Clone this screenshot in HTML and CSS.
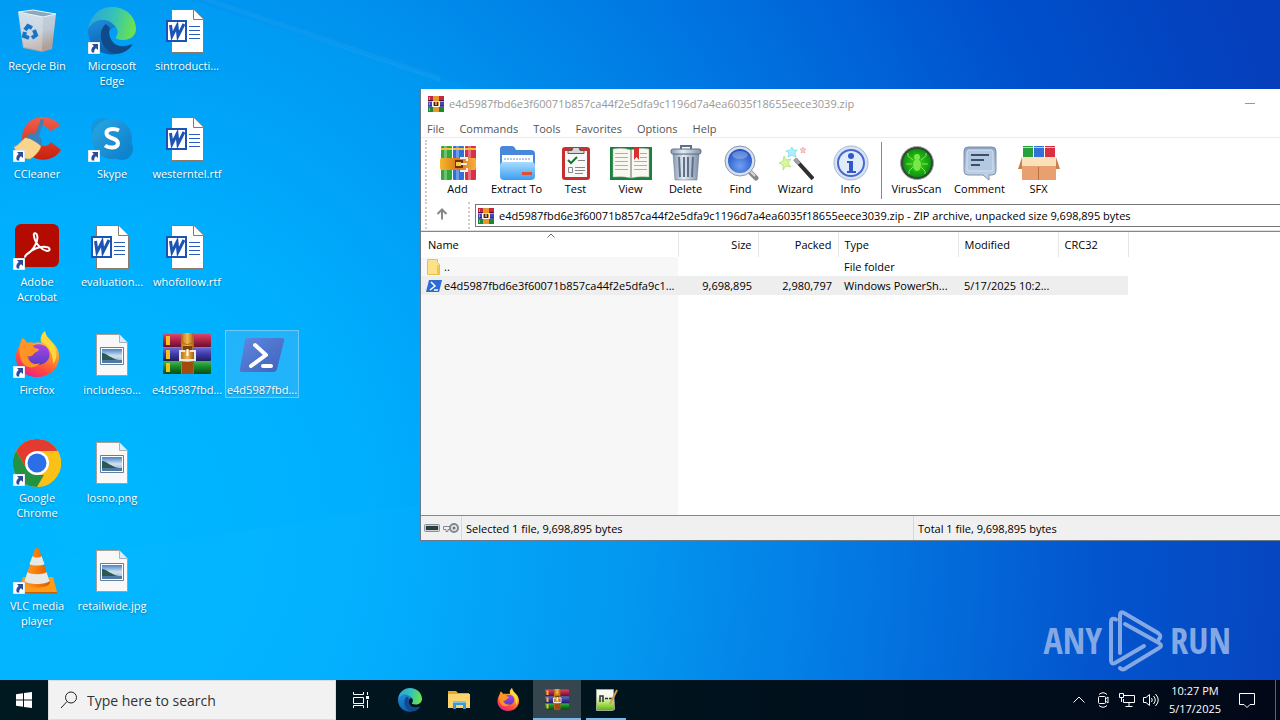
FILE: index.html
```html
<!DOCTYPE html>
<html lang="en">
<head>
    <meta charset="UTF-8">
    <meta name="viewport" content="width=device-width, initial-scale=1.0">
    <title>Desktop</title>
    <link rel="stylesheet" href="styles.css">
</head>
<body>
    <!-- Shared icons -->
    <svg class="sprite" aria-hidden="true">
        <defs>
            <linearGradient id="g-edge-top" x1="0" y1="0.3" x2="1" y2="0.5"><stop offset="0" stop-color="#2aa5dc"/><stop offset="0.5" stop-color="#35c2b8"/><stop offset="1" stop-color="#6be34e"/></linearGradient>
            <linearGradient id="g-edge-left" x1="0" y1="0" x2="0.4" y2="1"><stop offset="0" stop-color="#1e90dc"/><stop offset="1" stop-color="#0c5cae"/></linearGradient>
            <linearGradient id="g-ff" x1="0.8" y1="0" x2="0.3" y2="1"><stop offset="0" stop-color="#fff04a"/><stop offset="0.4" stop-color="#ff9a26"/><stop offset="0.75" stop-color="#ff4a40"/><stop offset="1" stop-color="#e8208a"/></linearGradient>
            <linearGradient id="g-ff-in" x1="0" y1="0" x2="0" y2="1"><stop offset="0" stop-color="#a846e8"/><stop offset="1" stop-color="#5a3cc4"/></linearGradient>
            <linearGradient id="g-ps" x1="0" y1="0" x2="1" y2="1"><stop offset="0" stop-color="#6088e0"/><stop offset="1" stop-color="#3d62bc"/></linearGradient>
            <linearGradient id="g-red" x1="0" y1="0" x2="0" y2="1"><stop offset="0" stop-color="#d8486a"/><stop offset="0.4" stop-color="#b82850"/><stop offset="1" stop-color="#68102c"/></linearGradient>
            <linearGradient id="g-blue" x1="0" y1="0" x2="0" y2="1"><stop offset="0" stop-color="#6a68d8"/><stop offset="0.4" stop-color="#4440b0"/><stop offset="1" stop-color="#201c60"/></linearGradient>
            <linearGradient id="g-green" x1="0" y1="0" x2="0" y2="1"><stop offset="0" stop-color="#40b048"/><stop offset="0.4" stop-color="#188a2c"/><stop offset="1" stop-color="#084c14"/></linearGradient>
            <linearGradient id="g-belt" x1="0" y1="0" x2="1" y2="0"><stop offset="0" stop-color="#b8741c"/><stop offset="0.5" stop-color="#f4b848"/><stop offset="1" stop-color="#a85c14"/></linearGradient>
            <linearGradient id="g-strap" x1="0" y1="0" x2="1" y2="0"><stop offset="0" stop-color="#f8b830"/><stop offset="0.5" stop-color="#d87818"/><stop offset="1" stop-color="#f8b040"/></linearGradient>
            <linearGradient id="g-bin" x1="0" y1="0" x2="0.3" y2="1"><stop offset="0" stop-color="#c4d8e8"/><stop offset="0.6" stop-color="#bcc8d4"/><stop offset="1" stop-color="#b0a098"/></linearGradient>
            <linearGradient id="g-skype" x1="0" y1="0" x2="1" y2="1"><stop offset="0" stop-color="#28a8e4"/><stop offset="1" stop-color="#0c7cc8"/></linearGradient>
            <linearGradient id="g-cc" x1="0" y1="0" x2="0" y2="1"><stop offset="0" stop-color="#f0604c"/><stop offset="1" stop-color="#c8200c"/></linearGradient>
            <linearGradient id="g-cone" x1="0" y1="0" x2="1" y2="0"><stop offset="0" stop-color="#ff9a20"/><stop offset="0.5" stop-color="#f87c08"/><stop offset="1" stop-color="#d85800"/></linearGradient>
            <linearGradient id="g-sky" x1="0" y1="0" x2="0" y2="1"><stop offset="0" stop-color="#4a80cc"/><stop offset="0.5" stop-color="#d0e4f0"/><stop offset="1" stop-color="#88a8c4"/></linearGradient>
            <linearGradient id="g-folder" x1="0" y1="0" x2="0" y2="1"><stop offset="0" stop-color="#a8dcff"/><stop offset="1" stop-color="#3c9cf0"/></linearGradient>
            <linearGradient id="g-steel" x1="0" y1="0" x2="1" y2="0"><stop offset="0" stop-color="#8898b0"/><stop offset="0.4" stop-color="#e4ecf4"/><stop offset="1" stop-color="#8090a8"/></linearGradient>
            <linearGradient id="g-bubble" x1="0" y1="0" x2="0" y2="1"><stop offset="0" stop-color="#88a4c8"/><stop offset="1" stop-color="#c8d8e8"/></linearGradient>
            <linearGradient id="g-page" x1="0" y1="0" x2="0" y2="1"><stop offset="0.3" stop-color="#f8faf0"/><stop offset="0.7" stop-color="#a8dc50"/><stop offset="1" stop-color="#58b018"/></linearGradient>
            <radialGradient id="g-lens" cx="0.5" cy="0.7" r="0.7"><stop offset="0" stop-color="#70a0f4"/><stop offset="1" stop-color="#1c50c0"/></radialGradient>
            <radialGradient id="g-virus"><stop offset="0" stop-color="#40d818"/><stop offset="1" stop-color="#0c9410"/></radialGradient>
        </defs>
        <symbol id="shortcut" viewBox="0 0 12 12">
            <path fill="#fff" stroke="#9ab" stroke-width="0.5" d="M0 0h12v12H0z"/>
            <path fill="#2c4c98" d="M4 2h6v6L8 6.200C6.500 7.200 6 8.500 6.300 10.500L4 10.500C2.600 8 3.500 5.500 5.800 4z"/>
        </symbol>
        <symbol id="edge" viewBox="0 0 48 48">
            <path fill="url(#g-edge-left)" d="M0 22C2 12 22 8 29 20c-6 0-9 5-7 11 3 8 12 10 22 6-7 10-20 13-31 8C4 41 0 32 0 22z"/>
            <path fill="#114a8b" d="M18 17c-8 6-7 21 4 28 9 4 18 0 23-8-8 5-17 3-21-3-3-4-4-10-2-13z"/>
            <path fill="url(#g-edge-top)" d="M0 22C2 8 12 0 24 0c14 0 24 10 24 22 0 7-6 11-13 11-6 0-8-2-7-3 3-4 2-8-2-12C19 10 6 11 0 22z"/>
        </symbol>
        <symbol id="firefox" viewBox="0 0 48 48">
            <path fill="url(#g-ff)" d="M24 46C11 46 3 37 3 26c0-6 2-10 5-13l1-6c3 1 4 3 5 5 2-1 5-1 7 0 3-1 5-1 7 0-1-5 0-9 4-12 1 6 5 8 8 12 4 4 6 8 6 14 0 12-10 20-22 20z"/>
            <path fill="url(#g-ff-in)" d="M18 17c3-5 13-5 17 1 4 7 0 15-9 16-9 0-14-8-8-17z"/>
            <path fill="#ff9426" d="M9 8c2 4 7 5 12 4-2 3-1 5 5 6 0 3-5 3-6 6-2 2-4 1-6 1 1 6 7 10 13 7-4 6-14 6-18-1-3-6-4-16 0-23z"/>
            <path fill="#ffd83c" d="M29 11c-1-4 0-8 3-10 1 6 5 8 8 12 5 7 4 16 0 20 0-10-3-17-11-22z"/>
        </symbol>
        <symbol id="word" viewBox="0 0 48 48">
            <path fill="#fff" stroke="#8a7868" d="M8.500 2.500h22l10 10v33h-32z"/>
            <path fill="#fff" stroke="#8a7868" d="M30.500 2.500v10h10"/>
            <path stroke="#2b5cb8" d="M26 19.500h11M26 23.500h11M26 27.500h11M26 31.500h11"/>
            <path fill="#fff" stroke="#1c54b4" stroke-width="2" d="M4 14h19v20H4z"/>
            <path fill="none" stroke="#1c54b4" stroke-width="3" d="M7.500 18l1.500 11 5-10 1 10 6-12"/>
        </symbol>
        <symbol id="picture" viewBox="0 0 48 48">
            <path fill="#f8f8f8" stroke="#a8a098" d="M8.500 3.500h23l8 8v33h-31z"/>
            <path fill="#d8eef8" stroke="#a8b0b8" d="M31.500 3.500v8h8"/>
            <path fill="#fff" stroke="#60809c" d="M12.500 16.500h23v17h-23z"/>
            <path fill="url(#g-sky)" d="M14 18h20v14H14z"/>
            <path fill="#2c5850" d="M14 22c5 0 9 6 17 7H14z"/>
            <path fill="#5078a0" d="M14 29h20v3H14z"/>
        </symbol>
        <symbol id="winrar" viewBox="0 0 48 48">
            <rect x="0" y="3" width="48" height="13" rx="1" fill="url(#g-red)"/>
            <rect x="0" y="17" width="48" height="13" rx="1" fill="url(#g-blue)"/>
            <rect x="0" y="31" width="48" height="12" rx="1" fill="url(#g-green)"/>
            <path fill="#f4c020" d="M3 5h4v9H3zM3 19h4v9H3zM3 32h4v9H3z"/>
            <path fill="url(#g-belt)" d="M18 2h13v41H18z"/>
            <path fill="#80400c" d="M20 15h9v4h-9z"/>
            <path fill="#a04c10" d="M19 31h11v12H19z"/>
            <path fill="none" stroke="#e8e8e8" stroke-width="2" d="M22 20h-5v9h15v-9h-5"/>
            <path stroke="#fff" stroke-width="2" d="M24.500 18v7"/>
            <path fill="none" stroke="#a86810" d="M19 4v7q5.500 5 11 0V4"/>
        </symbol>
        <!-- Simplified books for 16px -->
        <symbol id="winrar-small" viewBox="0 0 16 16">
            <path fill="#c02848" d="M0 0h16v5H0z"/>
            <path fill="#4048b8" d="M0 5.500h16v5H0z"/>
            <path fill="#188838" d="M0 11h16v5H0z"/>
            <path fill="#600c28" d="M0 4h16v1H0z"/>
            <path fill="#201850" d="M0 9.500h16v1H0z"/>
            <path fill="#e89828" d="M5 0h6v16H5zM1 1h1v3H1zM1 6.500h1v3H1zM1 12h1v3H1z"/>
            <path fill="#582008" d="M6 6h4v4H6z"/>
            <path fill="none" stroke="#fff" d="M6.500 5.500h-2v5h7v-5h-2M8 5v4"/>
        </symbol>
        <symbol id="powershell" viewBox="0 0 48 48">
            <path fill="url(#g-ps)" d="M9 7h35q3 0 2 3l-7 28q-1 3-4 3H4q-3 0-2-3L7 9q0-2 2-2z"/>
            <path fill="none" stroke="#fff" stroke-width="4" stroke-linecap="round" stroke-linejoin="round" d="M17 14l11 10-15 11M25 35h8"/>
        </symbol>
    </svg>

    <main class="desktop">
        <svg class="beams" viewBox="0 0 1280 680" preserveAspectRatio="none" aria-hidden="true">
            <path fill="#0060d8" fill-opacity="0.08" d="M190 0L640 140H1280V0z"/>
            <path fill="#fff" fill-opacity="0.04" d="M200 0L440 82V76L215 0z"/>
            <path fill="#40c8ff" fill-opacity="0.04" d="M150 545L840 440L1280 400V680H0V568z"/>
        </svg>

        <div class="icons">
            <div class="icon-row">
                <a href="#" class="shortcut">
                    <svg class="glyph" viewBox="0 0 48 48">
                        <path fill="url(#g-bin)" d="M5 5l38 2-4 35-10 3-19-4z"/>
                        <path fill="#8ca8bc" stroke="#e8f4fc" d="M5.500 5L20 3l23 4-13 3z"/>
                        <path fill="#fff" fill-opacity="0.25" d="M6 6l24 4-1 34-18-4z"/>
                        <path fill="none" stroke="#1474c8" stroke-width="4" d="M12 23l3-4 4 2M21 23l2 5-4 3M16 31l-5-2 1-4"/>
                    </svg>
                    <span>Recycle Bin</span>
                </a>
                <a href="#" class="shortcut">
                    <svg class="glyph" viewBox="0 0 48 48"><use href="#edge"/><use href="#shortcut" x="0" y="35" width="12" height="12"/></svg>
                    <span>Microsoft Edge</span>
                </a>
                <a href="#" class="shortcut">
                    <svg class="glyph" viewBox="0 0 48 48"><use href="#word"/></svg>
                    <span>sintroducti...</span>
                </a>
            </div>
            <div class="icon-row">
                <a href="#" class="shortcut">
                    <svg class="glyph" viewBox="0 0 48 48">
                        <path fill="url(#g-cc)" d="M47 11C40 0 22-1 14 9c-8 9-6 24 4 32 9 6 23 5 30-6l-10-8c-3 5-10 5-13 1-4-6-1-16 5-17 4 0 6 3 7 5z"/>
                        <path fill="#f8d48c" stroke="#d8a850" stroke-width="0.500" d="M1 32c5-2 7-6 11-9 6-2 13 2 16 8-1 5-6 10-11 13C9 44 4 39 1 32z"/>
                        <path fill="#3c80b8" d="M13 23c1-4 5-5 9-4l6-15 3 1-5 16c3 3 3 6 2 10-5-4-9-7-15-8z"/>
                        <use href="#shortcut" x="0" y="35" width="12" height="12"/>
                    </svg>
                    <span>CCleaner</span>
                </a>
                <a href="#" class="shortcut">
                    <svg class="glyph" viewBox="0 0 48 48">
                        <circle cx="14" cy="14" r="11" fill="#1896dc"/>
                        <circle cx="34" cy="34" r="11" fill="#0c84d0"/>
                        <circle cx="24" cy="24" r="20" fill="url(#g-skype)"/>
                        <path fill="none" stroke="#fff" stroke-width="4" d="M31 15.500c-5-2.500-13-2-12.500 3C19 24.500 30 22 30 28.500c-.500 5-9 5-13 2"/>
                        <use href="#shortcut" x="0" y="35" width="12" height="12"/>
                    </svg>
                    <span>Skype</span>
                </a>
                <a href="#" class="shortcut">
                    <svg class="glyph" viewBox="0 0 48 48"><use href="#word"/></svg>
                    <span>westerntel.rtf</span>
                </a>
            </div>
            <div class="icon-row">
                <a href="#" class="shortcut">
                    <svg class="glyph" viewBox="0 0 48 48">
                        <rect x="2" y="1" width="44" height="43" rx="6" fill="#b30b00"/>
                        <path fill="none" stroke="#fff" stroke-width="2" d="M13 32c7-4 13-14 11-20-1-3-4-2-3 1 1 8 8 14 13 15 4 0 3-4-1-4-7-1-14 3-19 7-3 3-2 4-1 1z"/>
                        <use href="#shortcut" x="0" y="35" width="12" height="12"/>
                    </svg>
                    <span>Adobe Acrobat</span>
                </a>
                <a href="#" class="shortcut">
                    <svg class="glyph" viewBox="0 0 48 48"><use href="#word"/></svg>
                    <span>evaluation...</span>
                </a>
                <a href="#" class="shortcut">
                    <svg class="glyph" viewBox="0 0 48 48"><use href="#word"/></svg>
                    <span>whofollow.rtf</span>
                </a>
            </div>
            <div class="icon-row">
                <a href="#" class="shortcut">
                    <svg class="glyph" viewBox="0 0 48 48"><use href="#firefox"/><use href="#shortcut" x="0" y="35" width="12" height="12"/></svg>
                    <span>Firefox</span>
                </a>
                <a href="#" class="shortcut">
                    <svg class="glyph" viewBox="0 0 48 48"><use href="#picture"/></svg>
                    <span>includeso...</span>
                </a>
                <a href="#" class="shortcut">
                    <svg class="glyph" viewBox="0 0 48 48"><use href="#winrar"/></svg>
                    <span>e4d5987fbd...</span>
                </a>
                <a href="#" class="shortcut selected">
                    <svg class="glyph" viewBox="0 0 48 48"><use href="#powershell"/></svg>
                    <span>e4d5987fbd...</span>
                </a>
            </div>
            <div class="icon-row">
                <a href="#" class="shortcut">
                    <svg class="glyph" viewBox="0 0 48 48">
                        <circle cx="24" cy="24" r="24" fill="#fbc116"/>
                        <path fill="#e33b2e" d="M3.200 12A24 24 0 0 1 44.800 12H24L13.600 30z"/>
                        <path fill="#229342" d="M3.200 12l10.400 18c3 5 8 6 12 6h8L24 48A24 24 0 0 1 3.200 12z"/>
                        <path fill="#fbc116" d="M44.800 12H24l10.400 18L24 48A24 24 0 0 0 44.800 12z"/>
                        <circle cx="24" cy="24" r="12" fill="#fff"/>
                        <circle cx="24" cy="24" r="9.500" fill="#2a6ee8"/>
                        <use href="#shortcut" x="0" y="35" width="12" height="12"/>
                    </svg>
                    <span>Google Chrome</span>
                </a>
                <a href="#" class="shortcut">
                    <svg class="glyph" viewBox="0 0 48 48"><use href="#picture"/></svg>
                    <span>losno.png</span>
                </a>
            </div>
            <div class="icon-row">
                <a href="#" class="shortcut">
                    <svg class="glyph" viewBox="0 0 48 48">
                        <path fill="#fc9c18" d="M10 30h30l4 15H5z"/>
                        <path fill="#c86000" d="M5 45h39v1.500H5z"/>
                        <path fill="url(#g-cone)" d="M22 2q2-2 4 0l11 34c-2 6-24 6-26 0z"/>
                        <path fill="#e8e8e4" d="M19.500 9c2 2 7 2 9 0l3 8c-2 2-13 2-15 0zM14.500 25c3 3 16 3 19 0l3 9c-3 4-22 4-25 0z"/>
                        <use href="#shortcut" x="0" y="35" width="12" height="12"/>
                    </svg>
                    <span>VLC media player</span>
                </a>
                <a href="#" class="shortcut">
                    <svg class="glyph" viewBox="0 0 48 48"><use href="#picture"/></svg>
                    <span>retailwide.jpg</span>
                </a>
            </div>
        </div>

        <section class="window">
            <header class="titlebar">
                <svg class="icon-16" viewBox="0 0 16 16"><use href="#winrar-small"/></svg>
                <h1>e4d5987fbd6e3f60071b857ca44f2e5dfa9c1196d7a4ea6035f18655eece3039.zip</h1>
                <button class="caption" aria-label="Minimize"><svg viewBox="0 0 10 10"><path d="M0 5.500h10"/></svg></button>
                <button class="caption" aria-label="Maximize"><svg viewBox="0 0 10 10"><path d="M.500.500h9v9h-9z"/></svg></button>
                <button class="caption" aria-label="Close"><svg viewBox="0 0 10 10"><path d="M0 0l10 10M10 0L0 10"/></svg></button>
            </header>

            <nav class="menu">
                <button>File</button>
                <button>Commands</button>
                <button>Tools</button>
                <button>Favorites</button>
                <button>Options</button>
                <button>Help</button>
            </nav>

            <div class="toolbar">
                <span class="grip"></span>
                <button>
                    <svg viewBox="0 0 36 36">
                        <rect x="1" y="1" width="11" height="34" rx="1" fill="#30a838"/>
                        <rect x="13" y="1" width="11" height="34" rx="1" fill="#3070d8"/>
                        <rect x="25" y="1" width="11" height="34" rx="1" fill="#d83048"/>
                        <path fill="#fff" fill-opacity="0.3" d="M4 1h3v34H4zM16 1h3v34h-3zM28 1h3v34h-3z"/>
                        <path fill="#f8c030" d="M1 3h11v2H1zM13 3h11v2H13zM25 3h11v2H25z"/>
                        <path fill="url(#g-strap)" d="M2 13h33q1 0 1 2v8q0 2-1 2H2q-2 0-2-2v-8q0-2 2-2z"/>
                        <path fill="#703008" d="M15 15h8v8h-8z"/>
                        <path fill="none" stroke="#f4f0e8" stroke-width="2" d="M20 13h7v3M20 26h7v-3M21 19h6"/>
                        <path fill="#f8c850" d="M16 17h5v4h-5z"/>
                    </svg>
                    <span>Add</span>
                </button>
                <button class="wide">
                    <svg viewBox="0 0 36 36">
                        <path fill="#4888dc" d="M1 4q0-3 3-3h9q2 0 3 2l1 2h15q4 0 4 4v20H1z"/>
                        <path fill="#fff" d="M3 10h31v10H3z"/>
                        <path stroke="#b8c8e0" stroke-width="2" stroke-dasharray="2 1" d="M5 14h27"/>
                        <rect x="1" y="17" width="35" height="18" rx="4" fill="url(#g-folder)"/>
                        <path fill="#e05030" d="M23 27h10v3H23z"/>
                    </svg>
                    <span>Extract To</span>
                </button>
                <button>
                    <svg viewBox="0 0 36 36">
                        <rect x="4" y="2" width="28" height="33" rx="3" fill="#c83030"/>
                        <path fill="#f8f8f8" d="M7 6h22v26H7z"/>
                        <path fill="#d8d8d8" stroke="#685858" d="M10 5.500h4l1-3h6l1 3h4v3H10z"/>
                        <path fill="none" stroke="#187830" stroke-width="2" d="M10 15l3 3 6-6"/>
                        <path stroke="#888" d="M20 15.500h7M17 22.500h10M17 25.500h10M17 28.500h8"/>
                        <path fill="none" stroke="#888" d="M10.500 22.500h4v5h-4z"/>
                    </svg>
                    <span>Test</span>
                </button>
                <button>
                    <svg class="book" viewBox="0 0 42 36">
                        <path fill="#188040" d="M0 2h42v33H0z"/>
                        <path fill="#f8f8f0" stroke="#b0b0a0" stroke-width="0.500" d="M3 4q10-2 18 1v28q-8-2-18-1zM39 4q-10-2-18 1v28q8-2 18-1z"/>
                        <path stroke="#b0b0a8" d="M5 8.500h13M5 12.500h13M5 16.500h13M5 20.500h13M5 24.500h13M24 16.500h13M24 20.500h13M24 24.500h13M30 8.500h7M30 12.500h7"/>
                        <path stroke="#888" d="M21 5v28"/>
                        <path fill="#d83030" d="M24 3h5v12l-2.500-3-2.500 3z"/>
                    </svg>
                    <span>View</span>
                </button>
                <button>
                    <svg viewBox="0 0 36 36">
                        <path fill="url(#g-steel)" stroke="#607088" stroke-width="0.500" d="M5 9h26l-2 26H7z"/>
                        <path stroke="#607088" stroke-width="2" d="M11 12l1 20M16 12v20M20 12v20M25 12l-1 20"/>
                        <rect x="3" y="4" width="30" height="5" rx="2" fill="url(#g-steel)" stroke="#607088"/>
                        <path fill="none" stroke="#607088" stroke-width="2" d="M13 4V1h10v3"/>
                    </svg>
                    <span>Delete</span>
                </button>
                <button>
                    <svg viewBox="0 0 36 36">
                        <path stroke="#888" stroke-width="5" stroke-linecap="round" d="M27 27l6 6"/>
                        <path stroke="#d8d8d8" stroke-width="2" d="M26 25l6 6"/>
                        <circle cx="17" cy="16" r="15" fill="#d8e0ec" stroke="#8898b0"/>
                        <circle cx="17" cy="16" r="12" fill="url(#g-lens)"/>
                        <ellipse cx="17" cy="10" rx="8" ry="4" fill="#fff" fill-opacity="0.250"/>
                    </svg>
                    <span>Find</span>
                </button>
                <button>
                    <svg viewBox="0 0 36 36">
                        <path stroke="#303030" stroke-width="4" d="M17 14l18 20"/>
                        <path stroke="#a0a0a0" stroke-width="4" d="M17 14l4 5"/>
                        <path fill="#d8f8a0" stroke="#90d040" stroke-width="0.500" d="M6 11l2 4 5-1-3 4 3 4-5-1-3 4v-5l-4-2 4-2z"/>
                        <path fill="#b0f0fc" stroke="#50c8e8" stroke-width="0.500" d="M14 2l1 3h4l-2 3 1 4-4-2-4 2 1-4-3-2 4-1z"/>
                        <path fill="#fcd0d0" stroke="#e88080" stroke-width="0.500" d="M25 2l1 2h2l-2 2 1 2-2-1-2 1 1-2-2-2h2z"/>
                    </svg>
                    <span>Wizard</span>
                </button>
                <button>
                    <svg viewBox="0 0 36 36">
                        <circle cx="18" cy="18" r="17" fill="#d8e4f4" stroke="#a8b8d0"/>
                        <circle cx="18" cy="18" r="13" fill="#e0ecfc" stroke="#4868d0" stroke-width="2"/>
                        <circle cx="18" cy="11" r="3" fill="#3058c8"/>
                        <path fill="#3058c8" d="M14 16h6v10h3v2H14v-2h2v-8h-2z"/>
                    </svg>
                    <span>Info</span>
                </button>
                <span class="divider"></span>
                <button class="wide">
                    <svg viewBox="0 0 36 36">
                        <circle cx="18" cy="18" r="16.500" fill="#304838" stroke="#a0a8a0"/>
                        <circle cx="18" cy="18" r="14" fill="url(#g-virus)"/>
                        <g fill="none" stroke="#80e858" stroke-width="1">
                            <path d="M14 15L9 11V8M22 15l5-4V8M13 19H7M23 19h6M14 22l-4 4v3M22 22l4 4v3"/>
                        </g>
                        <ellipse cx="18" cy="20" rx="4" ry="6" fill="#78e848"/>
                        <circle cx="18" cy="12" r="3" fill="#78e848"/>
                    </svg>
                    <span>VirusScan</span>
                </button>
                <button class="wide">
                    <svg viewBox="0 0 36 36">
                        <path fill="url(#g-bubble)" stroke="#8090a8" d="M6 2h24q4 0 4 4v20q0 4-4 4h-3v5l-6-5H6q-4 0-4-4V6q0-4 4-4z"/>
                        <rect x="5" y="5" width="26" height="21" rx="2" fill="#b4c8e0" stroke="#d8e4f0"/>
                        <path stroke="#385070" stroke-width="2" d="M9 10h18M9 15h13M9 20h9"/>
                    </svg>
                    <span>Comment</span>
                </button>
                <button>
                    <svg class="book" viewBox="0 0 42 36">
                        <path fill="#28a040" d="M5 1h10v12H5z"/>
                        <path fill="#3070d8" d="M16 1h10v12H16z"/>
                        <path fill="#d83040" d="M27 1h10v12H27z"/>
                        <path fill="#f8d040" d="M5 2h10v1H5zM16 2h10v1H16zM27 2h10v1H27z"/>
                        <path fill="#e8a070" d="M4 19h34v16H4z"/>
                        <path fill="#c88050" d="M4 12L0 24h4zM38 12l4 12h-4z"/>
                        <path fill="#fce0b8" d="M4 12h34v9H4z"/>
                        <path stroke="#b87040" d="M20.500 22v13"/>
                    </svg>
                    <span>SFX</span>
                </button>
            </div>

            <div class="addressbar">
                <span class="grip"></span>
                <button class="up" aria-label="Up one level"><svg viewBox="0 0 12 12"><path d="M6 11.500V1.500M1.500 6L6 1.500 10.500 6"/></svg></button>
                <span class="grip"></span>
                <label class="address">
                    <svg class="icon-16" viewBox="0 0 16 16"><use href="#winrar-small"/></svg>
                    <input type="text" aria-label="Address" value="e4d5987fbd6e3f60071b857ca44f2e5dfa9c1196d7a4ea6035f18655eece3039.zip - ZIP archive, unpacked size 9,698,895 bytes">
                </label>
            </div>

            <div class="list">
                <table>
                    <colgroup>
                        <col class="col-name">
                        <col class="col-number">
                        <col class="col-number">
                        <col class="col-type">
                        <col class="col-date">
                        <col class="col-crc">
                    </colgroup>
                    <thead>
                        <tr>
                            <th class="sorted">Name<svg viewBox="0 0 8 5"><path d="M.500 4.500L4 1l3.500 3.500"/></svg></th>
                            <th class="number">Size</th>
                            <th class="number">Packed</th>
                            <th>Type</th>
                            <th>Modified</th>
                            <th>CRC32</th>
                        </tr>
                    </thead>
                    <tbody>
                        <tr>
                            <td>
                                <div class="file">
                                    <svg class="icon-16" viewBox="0 0 16 16"><path fill="#fce08a" stroke="#e8c050" d="M1.500.500h10v3l2 2v10h-12z"/><path fill="#f0c858" d="M11 6h2v9h-2z"/></svg>
                                    <span>..</span>
                                </div>
                            </td>
                            <td></td>
                            <td></td>
                            <td>File folder</td>
                            <td></td>
                            <td></td>
                        </tr>
                        <tr class="current">
                            <td>
                                <div class="file">
                                    <svg class="icon-16" viewBox="0 0 16 16"><path fill="#2c6cd4" d="M3 2h13l-3 12H0z"/><path fill="none" stroke="#fff" stroke-width="1.500" d="M5 4l4 4-5 4M8 12h4"/></svg>
                                    <span>e4d5987fbd6e3f60071b857ca44f2e5dfa9c1...</span>
                                </div>
                            </td>
                            <td class="number">9,698,895</td>
                            <td class="number">2,980,797</td>
                            <td>Windows PowerSh...</td>
                            <td>5/17/2025 10:2...</td>
                            <td></td>
                        </tr>
                    </tbody>
                </table>
            </div>

            <footer class="statusbar">
                <div class="status-icons">
                    <svg viewBox="0 0 16 12"><rect x=".500" y="2.500" width="15" height="7" rx="1" fill="#c8d0d4" stroke="#88949c"/><path fill="#303c44" d="M2 4h12v4H2z"/></svg>
                    <svg viewBox="0 0 16 12"><circle cx="11" cy="6" r="4" fill="#e8ecf0" stroke="#808890" stroke-width="2"/><circle cx="11" cy="6" r="1.500" fill="#687078"/><path fill="none" stroke="#808890" d="M7 4.500H.500v3H3v2h2v-2h2"/></svg>
                </div>
                <p>Selected 1 file, 9,698,895 bytes</p>
                <p>Total 1 file, 9,698,895 bytes</p>
            </footer>
        </section>

        <div class="watermark">
            <span>ANY</span>
            <svg viewBox="0 0 54 62" aria-hidden="true">
                <path d="M7 9.500Q2 7 2 12v38q0 5 4 3l29-17"/>
                <path d="M11 43V5q0-4 4-2l34 20q4 3 1 6"/>
                <path d="M16 14l34 19q4 3 0 5L17 58q-3 3-6 0"/>
            </svg>
            <span>RUN</span>
        </div>
    </main>

    <footer class="taskbar">
        <button class="task" aria-label="Start">
            <svg class="icon-16" viewBox="0 0 16 16"><path fill="#fff" d="M0 2.300L7 1.300V7.500H0zM8 1.100L16 0v7.500H8zM0 8.500h7v6.200L0 13.700zM8 8.500h8V16l-8-1.100z"/></svg>
        </button>
        <label class="search">
            <svg viewBox="0 0 18 18"><circle cx="11" cy="6.500" r="5.500"/><path d="M7 10.500L1 17"/></svg>
            <input type="text" placeholder="Type here to search" aria-label="Search">
        </label>
        <button class="task" aria-label="Task view">
            <svg class="icon-16" viewBox="0 0 16 16"><path fill="none" stroke="#fff" d="M.500 0v2.500h10V0M.500 5.500h10v6H.500zM.500 16v-2.500h10V16M14.500 0v3M14.500 8v8"/><path fill="#fff" d="M13 4h3v3h-3z"/></svg>
        </button>
        <button class="task" aria-label="Microsoft Edge"><svg class="icon-24" viewBox="0 0 48 48"><use href="#edge"/></svg></button>
        <button class="task" aria-label="File Explorer">
            <svg class="icon-24" viewBox="0 0 24 24"><path fill="#e8a820" d="M1 3h8l2 2h11v4H1z"/><path fill="#fcd46c" d="M1 6h22v14H1z"/><path fill="#3c98d0" d="M6 13h13v8h-3v-4H9v4H6z"/><path fill="#78c4ec" d="M6 13h13v2H6z"/></svg>
        </button>
        <button class="task" aria-label="Firefox"><svg class="icon-24" viewBox="0 0 48 48"><use href="#firefox"/></svg></button>
        <button class="task active" aria-label="WinRAR"><svg class="icon-24" viewBox="0 0 48 48"><use href="#winrar"/></svg></button>
        <button class="task running" aria-label="Notepad++">
            <svg class="icon-24" viewBox="0 0 24 24"><path fill="url(#g-page)" stroke="#a0a898" d="M2.500 1.500h17l1 20-2 1h-16z"/><path fill="none" stroke="#303030" stroke-width="1.500" d="M6 14V8h3v6M11 10.500h3M15 10.500h3"/><path stroke="#c8a050" stroke-width="2" d="M23 2l-7 14"/></svg>
        </button>

        <div class="tray">
            <button aria-label="Show hidden icons"><svg viewBox="0 0 16 16"><path d="M2.500 10.500L8 5l5.500 5.500"/></svg></button>
            <button aria-label="Meet now"><svg viewBox="0 0 16 16"><rect x="3.500" y="4.500" width="7" height="7" rx="1"/><path d="M10.500 7l2.500-2v6l-2.500-2M4 2.500Q8-1 12 2.500M4 13.500Q8 17 12 13.500"/></svg></button>
            <button aria-label="Network"><svg viewBox="0 0 16 16"><path d="M5 3.500h10.500v7H4.500V7M10 10.500v4M6.500 14.500h7M.500 1.500h4v4h-4zM2.500 5.500V10"/></svg></button>
            <button aria-label="Volume"><svg viewBox="0 0 16 16"><path d="M.500 5.500H3l3.500-3v11L3 10.500H.500zM8.500 6q1.500 2 0 4M10.500 4q3.500 4 0 8M12.500 2q5.500 6 0 12"/></svg></button>
            <div class="clock">
                <time>10:27 PM</time>
                <time>5/17/2025</time>
            </div>
            <button class="notifications" aria-label="Notifications"><svg viewBox="0 0 16 16"><path d="M.500 1.500h15v11H11l-3 3-3-3H.500z"/></svg></button>
            <button class="show-desktop" aria-label="Show desktop"></button>
        </div>
    </footer>
</body>
</html>
```
FILE: styles.css
```css
* {
    box-sizing: border-box;
}

body {
    margin: 0;
    height: 100vh;
    display: flex;
    flex-direction: column;
    overflow: hidden;
    font-family: 'Open Sans', 'Noto Sans', sans-serif;
    font-size: 11px;
    color: #000;
}

button,
input {
    font: inherit;
    color: inherit;
    border: none;
    background: none;
    margin: 0;
    padding: 0;
}

h1,
p {
    margin: 0;
    font-size: 11px;
    font-weight: 400;
}

.sprite {
    position: absolute;
    width: 0;
    height: 0;
}

.icon-16 {
    width: 16px;
    height: 16px;
    flex: none;
}

.icon-24 {
    width: 24px;
    height: 24px;
    flex: none;
}

/* Desktop */
.desktop {
    position: relative;
    flex: 1;
    overflow: hidden;
    background: radial-gradient(ellipse 98% 200% at 6% 78%, #00b8ff 0%, #00b0ff 22%, #0096f0 44%, #0072e0 64%, #0050cc 82%, #063cba 100%);
}

.beams {
    position: absolute;
    top: 0;
    left: 0;
    width: 100%;
    height: 100%;
}

.icons {
    position: relative;
    padding-top: 6px;
}

.icon-row {
    display: flex;
    gap: 1px;
    height: 108px;
    align-items: flex-start;
}

.shortcut {
    display: flex;
    flex-direction: column;
    align-items: center;
    gap: 3px;
    width: 74px;
    border: 1px solid transparent;
    color: #fff;
    line-height: 15px;
    text-align: center;
    text-decoration: none;
    text-shadow: 0 1px 2px rgba(0, 0, 0, 0.4);
}

.shortcut.selected {
    background: rgba(110, 190, 240, 0.3);
    border-color: rgba(160, 215, 250, 0.6);
}

.glyph {
    width: 48px;
    height: 48px;
}

/* Archive window */
.window {
    position: absolute;
    left: 420px;
    right: -85px;
    top: 89px;
    height: 452px;
    display: flex;
    flex-direction: column;
    background: #fff;
    border-left: 1px solid #6a7a88;
    border-bottom: 1px solid #6a7a88;
}

.titlebar {
    display: flex;
    align-items: center;
    height: 29px;
    padding-left: 7px;
    color: #999;
}

.titlebar h1 {
    flex: 1;
    padding-left: 5px;
}

.caption {
    width: 46px;
    height: 29px;
}

.caption svg {
    width: 10px;
    height: 10px;
    fill: none;
    stroke: #999;
}

.menu {
    display: flex;
    height: 20px;
    gap: 15px;
    padding-top: 2px;
    padding-left: 6px;
    color: #555;
    border-bottom: 1px solid #ececec;
}

.toolbar {
    display: flex;
    height: 64px;
    padding: 4px 0 3px 4px;
}

.grip {
    width: 1px;
    margin: -2px 3px -2px 0;
    border-left: 2px dotted #d8c8c8;
}

.toolbar button {
    display: flex;
    flex-direction: column;
    align-items: center;
    min-width: 55px;
    line-height: 16px;
    padding-top: 3px;
}

.toolbar .wide {
    min-width: 63px;
}

.toolbar svg {
    width: 36px;
    height: 36px;
}

.toolbar .book {
    width: 42px;
}

.divider {
    width: 1px;
    margin: 0 3px;
    background: #888;
}

.addressbar {
    display: flex;
    height: 29px;
    padding: 2px 0 3px 4px;
    border-bottom: 1px solid #e0e0e0;
}

.up {
    width: 24px;
    margin-right: 14px;
}

.up svg {
    width: 12px;
    height: 12px;
    fill: none;
    stroke: #888;
    stroke-width: 2;
}

.address {
    display: flex;
    align-items: center;
    flex: 1;
    gap: 5px;
    margin-left: 2px;
    padding-left: 2px;
    border: 1px solid #777;
}

.address input {
    flex: 1;
}

.list {
    flex: 1;
    border-top: 1px solid #828790;
    background: linear-gradient(#f7f7f7, #f7f7f7) no-repeat 0 0 / 257px 100%;
}

table {
    table-layout: fixed;
    width: 707px;
    border-collapse: collapse;
}

.col-name {
    width: 257px;
}

.col-number {
    width: 80px;
}

.col-type {
    width: 120px;
}

.col-date {
    width: 100px;
}

.col-crc {
    width: 70px;
}

th {
    position: relative;
    height: 25px;
    padding: 0 6px;
    font-weight: 400;
    text-align: left;
    background: #fff;
    border-right: 1px solid #e5e5e5;
}

.sorted {
    padding-left: 7px;
}

.sorted svg {
    position: absolute;
    top: 1px;
    left: 49%;
    width: 8px;
    height: 5px;
    fill: none;
    stroke: #666;
}

td {
    height: 19px;
    padding: 0 6px;
    white-space: nowrap;
}

td:first-child {
    padding-left: 5px;
}

.number {
    text-align: right;
}

.current {
    background: #eee;
}

.file {
    display: flex;
    align-items: center;
    gap: 2px;
}

.statusbar {
    display: flex;
    height: 25px;
    align-items: center;
    background: #f0f0f0;
    border-top: 1px solid #828790;
}

.status-icons {
    display: flex;
    gap: 3px;
    width: 40px;
    padding-left: 3px;
}

.status-icons svg {
    width: 16px;
    height: 12px;
}

.statusbar p {
    flex: 1;
    padding-top: 2px;
    padding-left: 4px;
    line-height: 22px;
    border-left: 1px solid #d8d8d8;
}

.watermark {
    position: absolute;
    right: 49px;
    bottom: 8px;
    display: flex;
    align-items: center;
    gap: 7px;
    font-family: 'Liberation Sans Narrow', 'Open Sans Condensed', sans-serif;
    font-size: 36px;
    line-height: 62px;
    color: #84a8e4;
}

.watermark svg {
    width: 54px;
    height: 62px;
    fill: none;
    stroke: #84a8e4;
    stroke-width: 4;
    stroke-linecap: round;
}

/* Taskbar */
.taskbar {
    display: flex;
    height: 40px;
    background: linear-gradient(to right, #001820, #00141e 50%, #020818);
    color: #fff;
}

.task {
    display: flex;
    align-items: center;
    justify-content: center;
    width: 48px;
    margin-right: 1px;
    border-bottom: 2px solid transparent;
    border-top: 2px solid transparent;
}

.task:first-child {
    margin-right: 0;
}

.active {
    background: #36464f;
    border-bottom-color: #76b9ed;
}

.running {
    width: 40px;
    margin-left: 4px;
    border-bottom-color: #76b9ed;
}

.search {
    display: flex;
    align-items: center;
    gap: 9px;
    width: 288px;
    margin-right: 1px;
    padding-left: 11px;
    background: #f2f2f2;
    border: 1px solid #ddd;
    color: #222;
    font-size: 14px;
}

.search svg {
    width: 18px;
    height: 18px;
    fill: none;
    stroke: #222;
}

.search input {
    flex: 1;
}

.search input::placeholder {
    color: #333;
}

.tray {
    display: flex;
    align-items: center;
    margin-left: auto;
}

.tray button {
    display: flex;
    align-items: center;
    justify-content: center;
    width: 24px;
    height: 40px;
}

.tray svg {
    width: 16px;
    height: 16px;
    fill: none;
    stroke: #fff;
}

.clock {
    display: flex;
    flex-direction: column;
    width: 64px;
    line-height: 18px;
    text-align: center;
}

.tray .notifications {
    width: 40px;
}

.tray .show-desktop {
    width: 5px;
    margin-left: 8px;
    border-left: 1px solid #5a6474;
}
```
